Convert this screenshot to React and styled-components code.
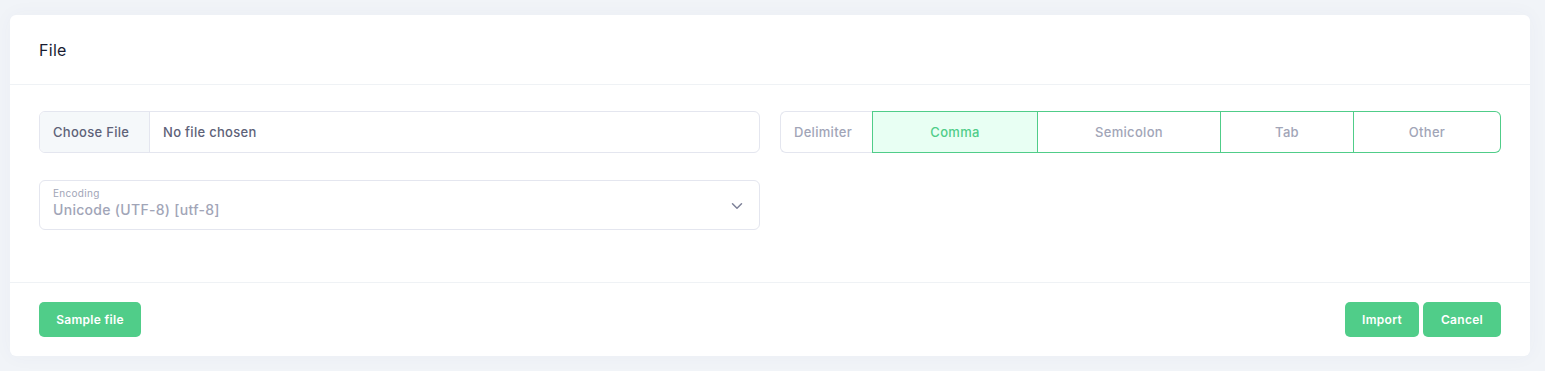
import React from 'react';
import styled, { createGlobalStyle } from 'styled-components';

const GlobalStyle = createGlobalStyle`
  body {
    margin: 0;
    background: #f1f4f8;
    font-family: Inter, "Open Sans", sans-serif;
    letter-spacing: 0.3px;
  }
`;

const Page = styled.div`
  padding: 15px 15px 15px 10px;
`;

const Card = styled.div`
  background: #fff;
  border-radius: 6px;
  box-shadow: 0 0 20px rgba(76, 87, 125, 0.04);
`;

const CardHeader = styled.div`
  height: 69px;
  display: flex;
  align-items: center;
  padding: 0 29px;
  border-bottom: 1px solid #eff2f5;
  font-size: 16px;
  font-weight: 400;
  color: #181c32;
`;

const CardBody = styled.div`
  display: grid;
  grid-template-columns: 721px 721px;
  column-gap: 20px;
  row-gap: 27px;
  padding: 26px 29px 52px;
  border-bottom: 1px solid #eff2f5;
`;

const FileField = styled.label`
  display: flex;
  height: 42px;
  box-sizing: border-box;
  border: 1px solid #e4e6ef;
  border-radius: 6px;
  overflow: hidden;
  font-size: 13px;
  font-weight: 500;
  color: #5e6278;
`;

const FileButton = styled.span`
  display: flex;
  align-items: center;
  padding: 0 13px;
  width: 110px;
  box-sizing: border-box;
  background: #f5f8fa;
  border-right: 1px solid #e4e6ef;
`;

const FileName = styled.span`
  display: flex;
  align-items: center;
  padding: 0 13px;
`;

const Delimiters = styled.div`
  display: flex;
  height: 42px;
  font-size: 13px;
  font-weight: 500;
`;

const DelimLabel = styled.div`
  display: flex;
  align-items: center;
  padding-left: 13px;
  width: 92px;
  box-sizing: border-box;
  border: 1px solid #e4e6ef;
  border-right: none;
  border-radius: 6px 0 0 6px;
  color: #a1a5b7;
`;

const DelimOption = styled.button`
  flex: 0 0 ${p => p.$w}px;
  box-sizing: border-box;
  font: inherit;
  letter-spacing: inherit;
  color: ${p => (p.$active ? '#50cd89' : '#a1a5b7')};
  background: ${p => (p.$active ? '#e8fff3' : '#fff')};
  border: 1px solid #50cd89;
  border-left: ${p => (p.$first ? '1px solid #50cd89' : 'none')};
  border-radius: ${p => (p.$last ? '0 6px 6px 0' : '0')};
  cursor: pointer;
`;

const SelectBox = styled.div`
  position: relative;
  height: 50px;
  box-sizing: border-box;
  border: 1px solid #e4e6ef;
  border-radius: 6px;
  padding: 6px 13px 0;
  display: flex;
  flex-direction: column;
`;

const SelectLabel = styled.span`
  font-size: 10px;
  color: #a1a5b7;
  line-height: 12px;
`;

const SelectValue = styled.span`
  font-size: 14px;
  font-weight: 500;
  color: #a1a5b7;
  line-height: 22px;
`;

const Chevron = styled.svg`
  position: absolute;
  right: 16px;
  top: 19px;
`;

const CardFooter = styled.div`
  display: flex;
  align-items: center;
  justify-content: space-between;
  padding: 19px 29px;
`;

const ButtonGroup = styled.div`
  display: flex;
  gap: 4px;
`;

const Button = styled.button`
  height: 35px;
  width: ${p => p.$w}px;
  padding: 0;
  background: #50cd89;
  color: #fff;
  border: none;
  border-radius: 5px;
  font-family: inherit;
  letter-spacing: inherit;
  font-size: 12px;
  font-weight: 600;
  cursor: pointer;
`;

const options = [
  { name: 'Comma', w: 166, active: true },
  { name: 'Semicolon', w: 183 },
  { name: 'Tab', w: 133 },
  { name: 'Other', w: 147 },
];

export default function App() {
  return (
    <>
      <GlobalStyle />
      <Page>
        <Card>
          <CardHeader>File</CardHeader>
          <CardBody>
            <FileField>
              <FileButton>Choose File</FileButton>
              <FileName>No file chosen</FileName>
            </FileField>
            <Delimiters>
              <DelimLabel>Delimiter</DelimLabel>
              {options.map((o, i) => (
                <DelimOption
                  key={o.name}
                  $w={o.w}
                  $active={o.active}
                  $first={i === 0}
                  $last={i === options.length - 1}
                >
                  {o.name}
                </DelimOption>
              ))}
            </Delimiters>
            <SelectBox>
              <SelectLabel>Encoding</SelectLabel>
              <SelectValue>Unicode (UTF-8) [utf-8]</SelectValue>
              <Chevron width="12" height="12" viewBox="0 0 16 16" fill="none">
                <path d="M2 5l6 6 6-6" stroke="#7e8299" strokeWidth="2" strokeLinecap="round" strokeLinejoin="round" />
              </Chevron>
            </SelectBox>
          </CardBody>
          <CardFooter>
            <Button $w={102}>Sample file</Button>
            <ButtonGroup>
              <Button $w={74}>Import</Button>
              <Button $w={78}>Cancel</Button>
            </ButtonGroup>
          </CardFooter>
        </Card>
      </Page>
    </>
  );
}
